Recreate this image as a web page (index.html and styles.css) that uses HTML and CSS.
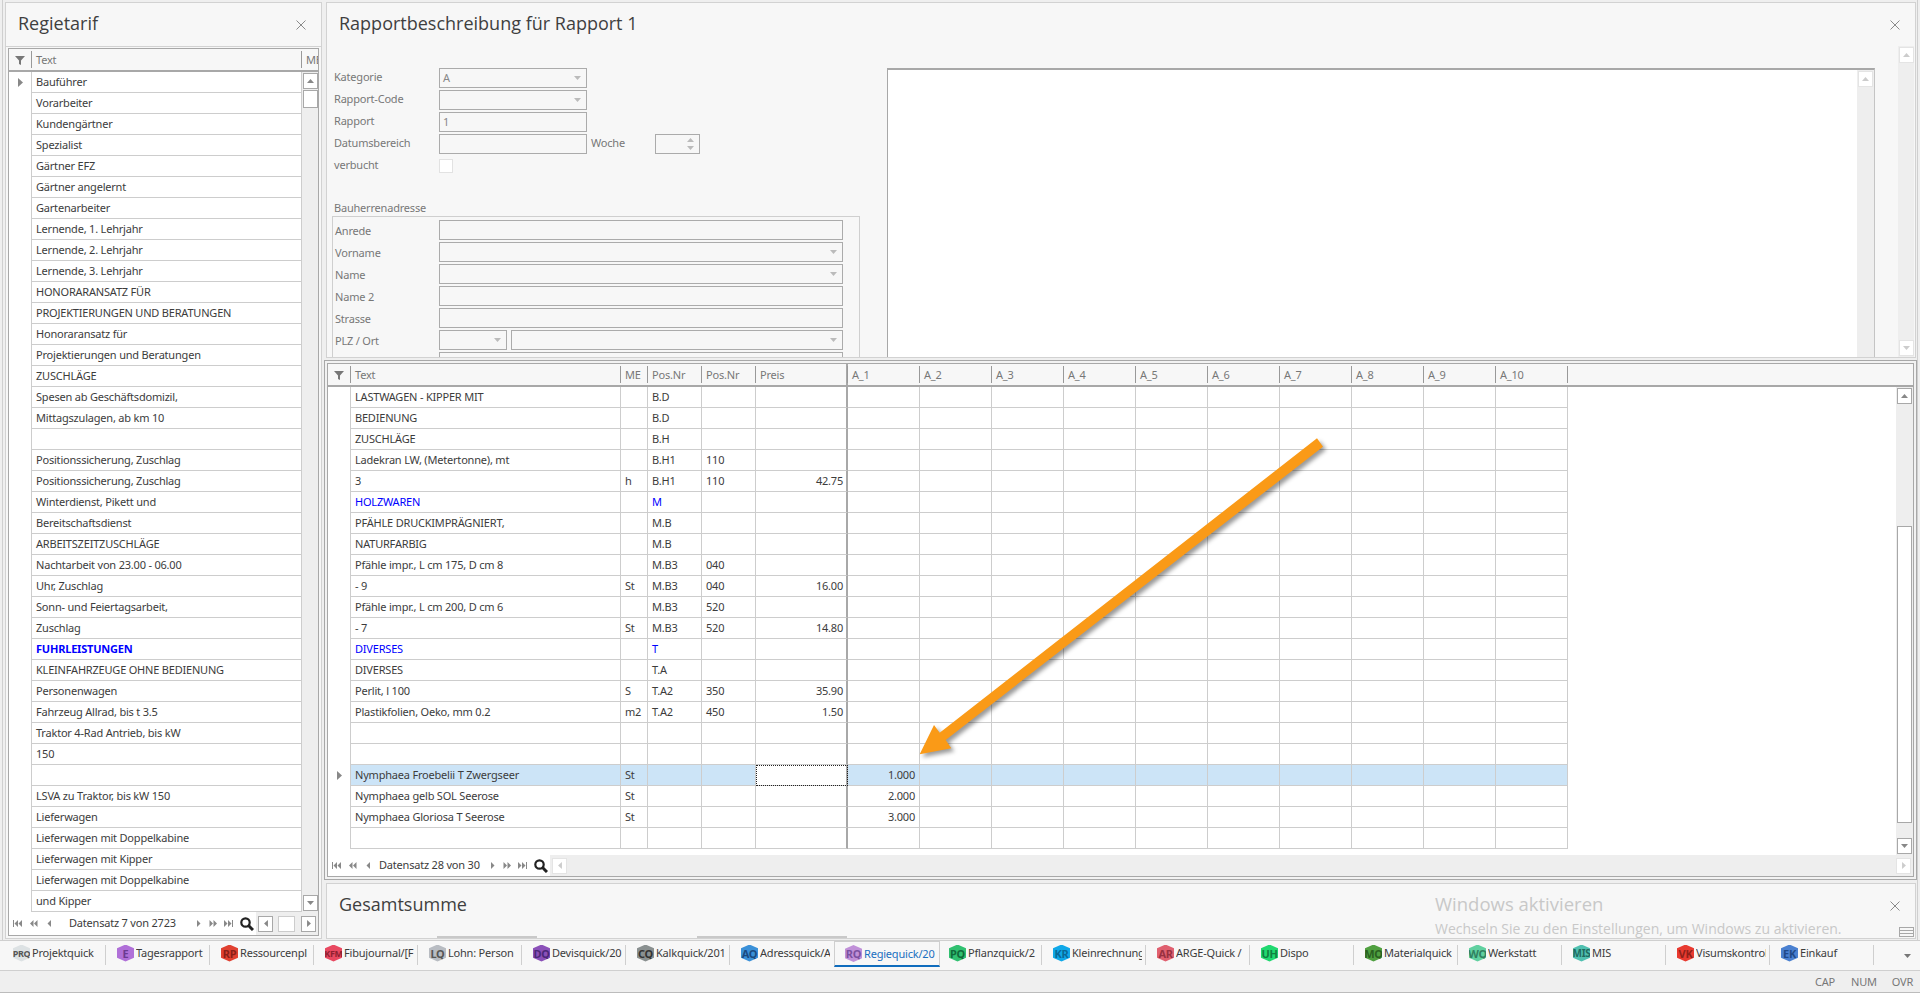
FILE: index.html
```html
<!DOCTYPE html>
<html>
<head>
	<meta charset="utf-8">
	<title>Regiequick</title>
	<link rel="stylesheet" href="styles.css">
</head>
<body>

<svg class="defs" width="0" height="0">
	<symbol id="i-filter" viewBox="0 0 10 10"><path d="M0 1h10L6 5.5V10L4 9V5.5z"/></symbol>
	<symbol id="i-row" viewBox="0 0 5 9"><path d="M0 0l5 4.5L0 9z"/></symbol>
	<symbol id="i-up" viewBox="0 0 9 5"><path d="M4.5 0L9 5H0z"/></symbol>
	<symbol id="i-down" viewBox="0 0 9 5"><path d="M0 0h9L4.500 5z"/></symbol>
	<symbol id="i-left" viewBox="0 0 5 9"><path d="M5 0v9L0 4.500z"/></symbol>
	<symbol id="i-right" viewBox="0 0 5 9"><path d="M0 0l5 4.500L0 9z"/></symbol>
	<symbol id="i-first" viewBox="0 0 9 7"><path d="M0 0h1v7H0zM5 0v7L1.500 3.500zM9 0v7L5.500 3.500z"/></symbol>
	<symbol id="i-pp" viewBox="0 0 9 7"><path d="M4.500 0v7L1 3.500zM8.500 0v7L5 3.500z"/></symbol>
	<symbol id="i-prev" viewBox="0 0 9 7"><path d="M6 0v7L2.500 3.500z"/></symbol>
	<symbol id="i-next" viewBox="0 0 9 7"><path d="M3 0v7l3.500-3.500z"/></symbol>
	<symbol id="i-nn" viewBox="0 0 9 7"><path d="M.5 0v7L4 3.500zM4.500 0v7L8 3.500z"/></symbol>
	<symbol id="i-last" viewBox="0 0 9 7"><path d="M0 0v7l3.500-3.500zM4 0v7l3.500-3.500zM8 0h1v7H8z"/></symbol>
	<symbol id="i-find" viewBox="0 0 14 14"><circle cx="5.500" cy="5.500" r="4.200" fill="none" stroke="currentColor" stroke-width="2.200"/><path d="M8.500 8.500l4.500 4.500" stroke="currentColor" stroke-width="3"/></symbol>
	<symbol id="i-close" viewBox="0 0 10 10"><path d="M.5.5l9 9M9.500.5l-9 9" fill="none" stroke="currentColor"/></symbol>
</svg>

<div class="main">

	<!-- Regietarif list -->
	<div class="panel left-panel">
		<div class="panel-head">
			<span class="panel-title">Regietarif</span>
			<svg class="close"><use href="#i-close"/></svg>
		</div>
		<div class="panel-body">
			<div class="grid">
				<table class="grid-head">
					<colgroup><col class="c-ind"><col class="c-text"><col></colgroup>
					<tr><th><svg class="filter"><use href="#i-filter"/></svg></th><th>Text</th><th class="clip">ME</th></tr>
				</table>
				<div class="grid-body">
					<table class="rows rows-left">
						<colgroup><col class="c-ind"><col class="c-text"></colgroup>
						<tr><td class="ind"><svg class="row-mark"><use href="#i-row"/></svg></td><td>Bauführer</td></tr>
						<tr><td class="ind"></td><td>Vorarbeiter</td></tr>
						<tr><td class="ind"></td><td>Kundengärtner</td></tr>
						<tr><td class="ind"></td><td>Spezialist</td></tr>
						<tr><td class="ind"></td><td>Gärtner EFZ</td></tr>
						<tr><td class="ind"></td><td>Gärtner angelernt</td></tr>
						<tr><td class="ind"></td><td>Gartenarbeiter</td></tr>
						<tr><td class="ind"></td><td>Lernende, 1. Lehrjahr</td></tr>
						<tr><td class="ind"></td><td>Lernende, 2. Lehrjahr</td></tr>
						<tr><td class="ind"></td><td>Lernende, 3. Lehrjahr</td></tr>
						<tr><td class="ind"></td><td>HONORARANSATZ FÜR</td></tr>
						<tr><td class="ind"></td><td>PROJEKTIERUNGEN UND BERATUNGEN</td></tr>
						<tr><td class="ind"></td><td>Honoraransatz für</td></tr>
						<tr><td class="ind"></td><td>Projektierungen und Beratungen</td></tr>
						<tr><td class="ind"></td><td>ZUSCHLÄGE</td></tr>
						<tr><td class="ind"></td><td>Spesen ab Geschäftsdomizil,</td></tr>
						<tr><td class="ind"></td><td>Mittagszulagen, ab km 10</td></tr>
						<tr><td class="ind"></td><td></td></tr>
						<tr><td class="ind"></td><td>Positionssicherung, Zuschlag</td></tr>
						<tr><td class="ind"></td><td>Positionssicherung, Zuschlag</td></tr>
						<tr><td class="ind"></td><td>Winterdienst, Pikett und</td></tr>
						<tr><td class="ind"></td><td>Bereitschaftsdienst</td></tr>
						<tr><td class="ind"></td><td>ARBEITSZEITZUSCHLÄGE</td></tr>
						<tr><td class="ind"></td><td>Nachtarbeit von 23.00 - 06.00</td></tr>
						<tr><td class="ind"></td><td>Uhr, Zuschlag</td></tr>
						<tr><td class="ind"></td><td>Sonn- und Feiertagsarbeit,</td></tr>
						<tr><td class="ind"></td><td>Zuschlag</td></tr>
						<tr><td class="ind"></td><td class="blue bold">FUHRLEISTUNGEN</td></tr>
						<tr><td class="ind"></td><td>KLEINFAHRZEUGE OHNE BEDIENUNG</td></tr>
						<tr><td class="ind"></td><td>Personenwagen</td></tr>
						<tr><td class="ind"></td><td>Fahrzeug Allrad, bis t 3.5</td></tr>
						<tr><td class="ind"></td><td>Traktor 4-Rad Antrieb, bis kW</td></tr>
						<tr><td class="ind"></td><td>150</td></tr>
						<tr><td class="ind"></td><td></td></tr>
						<tr><td class="ind"></td><td>LSVA zu Traktor, bis kW 150</td></tr>
						<tr><td class="ind"></td><td>Lieferwagen</td></tr>
						<tr><td class="ind"></td><td>Lieferwagen mit Doppelkabine</td></tr>
						<tr><td class="ind"></td><td>Lieferwagen mit Kipper</td></tr>
						<tr><td class="ind"></td><td>Lieferwagen mit Doppelkabine</td></tr>
						<tr><td class="ind"></td><td>und Kipper</td></tr>
					</table>
					<div class="vscroll">
						<div class="sb-btn"><svg class="tri-v"><use href="#i-up"/></svg></div>
						<div class="thumb thumb-small"></div>
						<div class="sb-btn sb-end"><svg class="tri-v"><use href="#i-down"/></svg></div>
					</div>
				</div>
				<div class="nav nav-left">
					<span class="nav-btn"><svg><use href="#i-first"/></svg></span>
					<span class="nav-btn"><svg><use href="#i-pp"/></svg></span>
					<span class="nav-btn"><svg><use href="#i-prev"/></svg></span>
					<span class="nav-text">Datensatz 7 von 2723</span>
					<span class="nav-btn narrow"><svg><use href="#i-next"/></svg></span>
					<span class="nav-btn narrow"><svg><use href="#i-nn"/></svg></span>
					<span class="nav-btn narrow"><svg><use href="#i-last"/></svg></span>
					<svg class="find"><use href="#i-find"/></svg>
					<div class="hscroll">
						<div class="sb-btn"><svg class="tri-h"><use href="#i-left"/></svg></div>
						<div class="hthumb"></div>
						<div class="sb-btn sb-right"><svg class="tri-h"><use href="#i-right"/></svg></div>
					</div>
				</div>
			</div>
		</div>
	</div>

	<div class="right-col">

		<!-- Rapport form -->
		<div class="panel top-panel">
			<div class="panel-head no-line">
				<span class="panel-title">Rapportbeschreibung für Rapport 1</span>
				<svg class="close"><use href="#i-close"/></svg>
			</div>
			<div class="top-body">
				<div class="form">
					<div class="form-row"><label>Kategorie</label><div class="field w-148 combo"><span>A</span><svg class="tri-v"><use href="#i-down"/></svg></div></div>
					<div class="form-row"><label>Rapport-Code</label><div class="field w-148 combo"><svg class="tri-v"><use href="#i-down"/></svg></div></div>
					<div class="form-row"><label>Rapport</label><div class="field w-148"><span>1</span></div></div>
					<div class="form-row">
						<label>Datumsbereich</label><div class="field w-148"></div>
						<label class="week-label">Woche</label>
						<div class="field spin"><svg class="tri-s"><use href="#i-up"/></svg><svg class="tri-s"><use href="#i-down"/></svg></div>
					</div>
					<div class="form-row"><label>verbucht</label><div class="check"></div></div>
					<div class="group-title">Bauherrenadresse</div>
					<div class="group">
						<div class="form-row"><label>Anrede</label><div class="field w-404"></div></div>
						<div class="form-row"><label>Vorname</label><div class="field w-404 combo"><svg class="tri-v"><use href="#i-down"/></svg></div></div>
						<div class="form-row"><label>Name</label><div class="field w-404 combo"><svg class="tri-v"><use href="#i-down"/></svg></div></div>
						<div class="form-row"><label>Name 2</label><div class="field w-404"></div></div>
						<div class="form-row"><label>Strasse</label><div class="field w-404"></div></div>
						<div class="form-row">
							<label>PLZ / Ort</label>
							<div class="field w-68 combo"><svg class="tri-v"><use href="#i-down"/></svg></div>
							<div class="field w-332 combo"><svg class="tri-v"><use href="#i-down"/></svg></div>
						</div>
						<div class="form-row"><label></label><div class="field w-404"></div></div>
					</div>
				</div>
				<div class="memo">
					<div class="memo-scroll"><div class="sb-btn off"><svg class="tri-v"><use href="#i-up"/></svg></div></div>
				</div>
				<div class="vscroll outer-scroll">
					<div class="sb-btn off"><svg class="tri-v"><use href="#i-up"/></svg></div>
					<div class="sb-btn off sb-end"><svg class="tri-v"><use href="#i-down"/></svg></div>
				</div>
			</div>
		</div>

		<!-- Rapport positions -->
		<div class="grid-wrap">
			<div class="grid">
				<table class="grid-head head-wide">
					<colgroup><col class="c-ind"><col class="c-text"><col class="c-unit"><col class="c-pos"><col class="c-pos"><col class="c-price"><col class="c-a" span="10"><col></colgroup>
					<tr><th><svg class="filter"><use href="#i-filter"/></svg></th><th>Text</th><th>ME</th><th>Pos.Nr</th><th>Pos.Nr</th><th class="freeze">Preis</th><th>A_1</th><th>A_2</th><th>A_3</th><th>A_4</th><th>A_5</th><th>A_6</th><th>A_7</th><th>A_8</th><th>A_9</th><th>A_10</th><th class="clip"></th></tr>
				</table>
				<div class="grid-body">
					<div class="rows-area">
						<table class="rows rows-wide">
							<colgroup><col class="c-ind"><col class="c-text"><col class="c-unit"><col class="c-pos"><col class="c-pos"><col class="c-price"><col class="c-a" span="10"></colgroup>
							<tr><td class="ind"></td><td>LASTWAGEN - KIPPER MIT</td><td></td><td>B.D</td><td></td><td class="freeze"></td><td></td><td></td><td></td><td></td><td></td><td></td><td></td><td></td><td></td><td></td></tr>
							<tr><td class="ind"></td><td>BEDIENUNG</td><td></td><td>B.D</td><td></td><td class="freeze"></td><td></td><td></td><td></td><td></td><td></td><td></td><td></td><td></td><td></td><td></td></tr>
							<tr><td class="ind"></td><td>ZUSCHLÄGE</td><td></td><td>B.H</td><td></td><td class="freeze"></td><td></td><td></td><td></td><td></td><td></td><td></td><td></td><td></td><td></td><td></td></tr>
							<tr><td class="ind"></td><td>Ladekran LW, (Metertonne), mt</td><td></td><td>B.H1</td><td>110</td><td class="freeze"></td><td></td><td></td><td></td><td></td><td></td><td></td><td></td><td></td><td></td><td></td></tr>
							<tr><td class="ind"></td><td>3</td><td>h</td><td>B.H1</td><td>110</td><td class="freeze num">42.75</td><td></td><td></td><td></td><td></td><td></td><td></td><td></td><td></td><td></td><td></td></tr>
							<tr><td class="ind"></td><td class="blue">HOLZWAREN</td><td></td><td class="blue">M</td><td></td><td class="freeze"></td><td></td><td></td><td></td><td></td><td></td><td></td><td></td><td></td><td></td><td></td></tr>
							<tr><td class="ind"></td><td>PFÄHLE DRUCKIMPRÄGNIERT,</td><td></td><td>M.B</td><td></td><td class="freeze"></td><td></td><td></td><td></td><td></td><td></td><td></td><td></td><td></td><td></td><td></td></tr>
							<tr><td class="ind"></td><td>NATURFARBIG</td><td></td><td>M.B</td><td></td><td class="freeze"></td><td></td><td></td><td></td><td></td><td></td><td></td><td></td><td></td><td></td><td></td></tr>
							<tr><td class="ind"></td><td>Pfähle impr., L cm 175, D cm 8</td><td></td><td>M.B3</td><td>040</td><td class="freeze"></td><td></td><td></td><td></td><td></td><td></td><td></td><td></td><td></td><td></td><td></td></tr>
							<tr><td class="ind"></td><td>- 9</td><td>St</td><td>M.B3</td><td>040</td><td class="freeze num">16.00</td><td></td><td></td><td></td><td></td><td></td><td></td><td></td><td></td><td></td><td></td></tr>
							<tr><td class="ind"></td><td>Pfähle impr., L cm 200, D cm 6</td><td></td><td>M.B3</td><td>520</td><td class="freeze"></td><td></td><td></td><td></td><td></td><td></td><td></td><td></td><td></td><td></td><td></td></tr>
							<tr><td class="ind"></td><td>- 7</td><td>St</td><td>M.B3</td><td>520</td><td class="freeze num">14.80</td><td></td><td></td><td></td><td></td><td></td><td></td><td></td><td></td><td></td><td></td></tr>
							<tr><td class="ind"></td><td class="blue">DIVERSES</td><td></td><td class="blue">T</td><td></td><td class="freeze"></td><td></td><td></td><td></td><td></td><td></td><td></td><td></td><td></td><td></td><td></td></tr>
							<tr><td class="ind"></td><td>DIVERSES</td><td></td><td>T.A</td><td></td><td class="freeze"></td><td></td><td></td><td></td><td></td><td></td><td></td><td></td><td></td><td></td><td></td></tr>
							<tr><td class="ind"></td><td>Perlit, l 100</td><td>S</td><td>T.A2</td><td>350</td><td class="freeze num">35.90</td><td></td><td></td><td></td><td></td><td></td><td></td><td></td><td></td><td></td><td></td></tr>
							<tr><td class="ind"></td><td>Plastikfolien, Oeko, mm 0.2</td><td>m2</td><td>T.A2</td><td>450</td><td class="freeze num">1.50</td><td></td><td></td><td></td><td></td><td></td><td></td><td></td><td></td><td></td><td></td></tr>
							<tr><td class="ind"></td><td></td><td></td><td></td><td></td><td class="freeze"></td><td></td><td></td><td></td><td></td><td></td><td></td><td></td><td></td><td></td><td></td></tr>
							<tr><td class="ind"></td><td></td><td></td><td></td><td></td><td class="freeze"></td><td></td><td></td><td></td><td></td><td></td><td></td><td></td><td></td><td></td><td></td></tr>
							<tr class="selected"><td class="ind"><svg class="row-mark"><use href="#i-row"/></svg></td><td>Nymphaea Froebelii T Zwergseer</td><td>St</td><td></td><td></td><td class="freeze focus"></td><td class="num">1.000</td><td></td><td></td><td></td><td></td><td></td><td></td><td></td><td></td><td></td></tr>
							<tr><td class="ind"></td><td>Nymphaea gelb SOL Seerose</td><td>St</td><td></td><td></td><td class="freeze"></td><td class="num">2.000</td><td></td><td></td><td></td><td></td><td></td><td></td><td></td><td></td><td></td></tr>
							<tr><td class="ind"></td><td>Nymphaea Gloriosa T Seerose</td><td>St</td><td></td><td></td><td class="freeze"></td><td class="num">3.000</td><td></td><td></td><td></td><td></td><td></td><td></td><td></td><td></td><td></td></tr>
							<tr><td class="ind"></td><td></td><td></td><td></td><td></td><td class="freeze"></td><td></td><td></td><td></td><td></td><td></td><td></td><td></td><td></td><td></td><td></td></tr>
						</table>
					</div>
					<div class="vscroll wide-scroll">
						<div class="sb-btn"><svg class="tri-v"><use href="#i-up"/></svg></div>
						<div class="thumb thumb-big"></div>
						<div class="sb-btn sb-end"><svg class="tri-v"><use href="#i-down"/></svg></div>
					</div>
				</div>
				<div class="nav nav-wide">
					<span class="nav-btn"><svg><use href="#i-first"/></svg></span>
					<span class="nav-btn"><svg><use href="#i-pp"/></svg></span>
					<span class="nav-btn"><svg><use href="#i-prev"/></svg></span>
					<span class="nav-text">Datensatz 28 von 30</span>
					<span class="nav-btn narrow"><svg><use href="#i-next"/></svg></span>
					<span class="nav-btn narrow"><svg><use href="#i-nn"/></svg></span>
					<span class="nav-btn narrow"><svg><use href="#i-last"/></svg></span>
					<svg class="find"><use href="#i-find"/></svg>
					<div class="hscroll">
						<div class="sb-btn off"><svg class="tri-h"><use href="#i-left"/></svg></div>
						<div class="sb-btn off sb-right"><svg class="tri-h"><use href="#i-right"/></svg></div>
					</div>
				</div>
			</div>
		</div>

		<!-- Gesamtsumme -->
		<div class="panel summary">
			<div class="panel-head no-line">
				<span class="panel-title">Gesamtsumme</span>
				<svg class="close"><use href="#i-close"/></svg>
			</div>
			<div class="sum-mark sum-mark-a"></div>
			<div class="sum-mark sum-mark-b"></div>
			<div class="split-icon"></div>
			<div class="watermark">
				<div class="wm-title">Windows aktivieren</div>
				<div class="wm-text">Wechseln Sie zu den Einstellungen, um Windows zu aktivieren.</div>
			</div>
		</div>
	</div>

	<!-- arrow drawn on top of the grid -->
	<svg class="arrow" viewBox="0 0 415 330"><path d="M6.700 324.300L21 295l5.700 7.700L404 8.300l6 8.400L32.700 310l5.600 8.300z"/></svg>
</div>

<div class="tabbar">
	<div class="tab"><span class="hex h-prq">PRQ</span><span class="tab-label">Projektquick</span></div>
	<div class="tab"><span class="hex h-e">E</span><span class="tab-label">Tagesrapport</span></div>
	<div class="tab"><span class="hex h-rp">RP</span><span class="tab-label">Ressourcenpl</span></div>
	<div class="tab"><span class="hex h-kfm">KFM</span><span class="tab-label">Fibujournal/[F</span></div>
	<div class="tab"><span class="hex h-lq">LQ</span><span class="tab-label">Lohn: Person</span></div>
	<div class="tab"><span class="hex h-dq">DQ</span><span class="tab-label">Devisquick/20</span></div>
	<div class="tab"><span class="hex h-cq">CQ</span><span class="tab-label">Kalkquick/201</span></div>
	<div class="tab before-active"><span class="hex h-aq">AQ</span><span class="tab-label">Adressquick/A</span></div>
	<div class="tab active"><span class="hex h-rq">RQ</span><span class="tab-label">Regiequick/20</span></div>
	<div class="tab"><span class="hex h-pq">PQ</span><span class="tab-label">Pflanzquick/2</span></div>
	<div class="tab"><span class="hex h-kr">KR</span><span class="tab-label">Kleinrechnung</span></div>
	<div class="tab"><span class="hex h-ar">AR</span><span class="tab-label">ARGE-Quick /</span></div>
	<div class="tab"><span class="hex h-uh">UH</span><span class="tab-label">Dispo</span></div>
	<div class="tab"><span class="hex h-mq">MQ</span><span class="tab-label">Materialquick</span></div>
	<div class="tab"><span class="hex h-wq">WQ</span><span class="tab-label">Werkstatt</span></div>
	<div class="tab"><span class="hex h-mis">MIS</span><span class="tab-label">MIS</span></div>
	<div class="tab"><span class="hex h-vk">VK</span><span class="tab-label">Visumskontrol</span></div>
	<div class="tab"><span class="hex h-ek">EK</span><span class="tab-label">Einkauf</span></div>
	<svg class="tab-more"><use href="#i-down"/></svg>
</div>

<div class="statusbar">
	<span class="st-cap">CAP</span>
	<span class="st-num">NUM</span>
	<span class="st-ovr">OVR</span>
</div>

</body>
</html>
```

FILE: styles.css
```css
html, body {
	margin: 0;
	height: 100%;
}

body {
	display: flex;
	flex-direction: column;
	height: 993px;
	overflow: hidden;
	background-color: #efefef;
	font-family: "Noto Sans", sans-serif;
	font-size: 11px;
	letter-spacing: -0.2px;
	color: #3c3c3c;
}

.defs {
	position: absolute;
}

svg {
	display: block;
	fill: currentColor;
}

.main {
	position: relative;
	display: flex;
	height: 938px;
	margin: 0 2px;
	padding: 2px 0 0 2px;
	border-left: 1px solid #cfcfcf;
	border-right: 1px solid #cfcfcf;
}

/* Panels */
.panel {
	box-sizing: border-box;
	border: 1px solid #d2d2d2;
	background-color: #f7f7f7;
}

.panel-head {
	box-sizing: border-box;
	display: flex;
	align-items: center;
	justify-content: space-between;
	height: 44px;
	padding: 0 15px 0 12px;
	border-bottom: 1px solid #d2d2d2;
}

.panel-head.no-line {
	height: 43px;
	border-bottom: none;
}

.panel-title {
	padding-bottom: 3px;
	font-family: "Open Sans", sans-serif;
	font-size: 18px;
	letter-spacing: 0;
	color: #3f3f3f;
	white-space: nowrap;
}

.close {
	width: 10px;
	height: 10px;
	color: #8a8a8a;
}

.left-panel {
	display: flex;
	flex-direction: column;
	width: 317px;
	height: 937px;
	margin-right: 2px;
}

.left-panel .panel-body {
	flex: 1;
	display: flex;
	min-height: 0;
	padding: 1px 2px 2px;
}

.right-col {
	display: flex;
	flex-direction: column;
	width: 1593px;
}

/* Grids */
.grid {
	box-sizing: border-box;
	flex: 1;
	display: flex;
	flex-direction: column;
	min-width: 0;
	border: 1px solid #a8a8a8;
	background-color: #fff;
}

.grid-head,
.rows {
	table-layout: fixed;
	border-collapse: separate;
	border-spacing: 0;
}

.grid-head {
	height: 23px;
	flex: none;
	width: 100%;
	background-color: #f7f7f7;
	border-bottom: 2px solid #a8a8a8;
}

.grid-head th {
	height: 21px;
	padding: 0 0 0 4px;
	font-weight: normal;
	text-align: left;
	color: #777;
	white-space: nowrap;
	overflow: hidden;
	position: relative;
}

.grid-head th::after {
	content: "";
	position: absolute;
	right: 0;
	top: 2px;
	bottom: 2px;
	width: 1px;
	background-color: #999;
}

.grid-head th.clip::after {
	display: none;
}

.c-ind { width: 23px; }
.c-text { width: 270px; }
.c-unit { width: 27px; }
.c-pos { width: 54px; }
.c-price { width: 92px; }
.c-a { width: 72px; }

.filter {
	width: 10px;
	height: 10px;
	margin-left: 2px;
	color: #777;
}

.grid-body {
	flex: 1;
	display: flex;
	min-height: 0;
	background-color: #fff;
}

.rows-area {
	flex: 1;
	min-width: 0;
}

.rows {
	flex: none;
	align-self: flex-start;
}

.rows-left { width: 293px; }
.rows-wide { width: 1240px; }

.rows td {
	box-sizing: border-box;
	height: 21px;
	padding: 0 4px 2px;
	border-right: 1px solid #cdcdcd;
	border-bottom: 1px solid #cdcdcd;
	white-space: nowrap;
	overflow: hidden;
}

.rows td.ind {
	padding: 0 0 0 8px;
	border-bottom: none;
}

.row-mark {
	width: 5px;
	height: 9px;
	margin-left: 1px;
	color: #888;
}

.rows .num {
	text-align: right;
}

.blue {
	color: #0000ff;
}

.bold {
	font-weight: bold;
}

.selected td {
	background-color: #cce4f7;
}

.selected td.ind {
	background-color: #fff;
}

.selected td.focus {
	background-color: #fff;
	outline: 1px dotted #222;
	outline-offset: -1px;
}

.freeze {
	box-shadow: inset -2px 0 0 #a8a8a8;
}

.rows td.freeze {
	border-right: 2px solid #a8a8a8;
	box-shadow: none;
}

.rows td.num.freeze {
	padding-right: 3px;
}

/* Scrollbars */
.vscroll {
	flex: 1;
	display: flex;
	flex-direction: column;
	align-items: center;
	padding: 1px 0;
	background-color: #eee;
}

.sb-btn {
	box-sizing: border-box;
	display: flex;
	flex: none;
	align-items: center;
	justify-content: center;
	width: 15px;
	height: 16px;
	border: 1px solid #a8a8a8;
	background-color: #fff;
	color: #888;
}

.sb-btn.off {
	border-color: #e4e4e4;
	color: #ccc;
}

.sb-end {
	margin-top: auto;
}

.tri-v {
	width: 7px;
	height: 4px;
}

.tri-h {
	width: 4px;
	height: 7px;
}

.thumb {
	box-sizing: border-box;
	width: 15px;
	border: 1px solid #a8a8a8;
	background-color: #fff;
}

.thumb-small {
	height: 18px;
	margin-top: 1px;
}

.thumb-big {
	height: 297px;
	margin-top: 122px;
}

.wide-scroll {
	flex: none;
	width: 17px;
}

/* Record navigator */
.nav {
	flex: none;
	display: flex;
	align-items: center;
	height: 23px;
	background-color: #fff;
}

.nav-wide {
	height: 21px;
}

.nav-btn {
	display: flex;
	align-items: center;
	justify-content: center;
	width: 16px;
	color: #888;
}

.nav-btn svg {
	width: 9px;
	height: 7px;
}

.nav-btn.narrow {
	width: 15px;
}

.nav-text {
	padding-bottom: 2px;
	color: #3c3c3c;
	white-space: nowrap;
}

.nav-left .nav-text {
	width: 122px;
	margin-left: 12px;
}

.nav-wide .nav-text {
	width: 106px;
	margin-left: 3px;
}

.find {
	flex: none;
	width: 14px;
	height: 14px;
	margin: 0 2px 0 4px;
	color: #222;
}

.hscroll {
	flex: 1;
	display: flex;
	align-items: center;
	align-self: stretch;
	padding: 1px 2px;
	background-color: #eee;
}

.hthumb {
	box-sizing: border-box;
	width: 17px;
	height: 16px;
	margin-left: 5px;
	border: 1px solid #ccc;
	background-color: #fff;
}

.sb-right {
	margin-left: auto;
}

/* Top form */
.top-panel {
	flex: none;
	height: 356px;
	margin: 0 1px 0 2px;
	overflow: hidden;
}

.top-body {
	display: flex;
	height: 311px;
	overflow: hidden;
}

.form {
	flex: none;
	box-sizing: border-box;
	width: 560px;
	padding: 22px 0 0 7px;
}

.form-row {
	display: flex;
	align-items: center;
	height: 20px;
	margin-bottom: 2px;
}

.form-row label {
	flex: none;
	width: 105px;
	padding-bottom: 3px;
	color: #777;
}

.field {
	box-sizing: border-box;
	flex: none;
	display: flex;
	align-items: center;
	height: 20px;
	padding: 0 3px;
	border: 1px solid #ababab;
	color: #888;
}

.field span {
	padding-bottom: 2px;
}

.combo {
	justify-content: space-between;
}

.combo .tri-v {
	margin-left: auto;
	margin-right: 2px;
	color: #bbb;
}

.w-148 { width: 148px; }
.w-404 { width: 404px; }
.w-68 { width: 68px; margin-right: 4px; }
.w-332 { width: 332px; }

.form-row .week-label {
	width: 64px;
	margin-left: 4px;
}

.spin {
	width: 45px;
	flex-direction: column;
	align-items: flex-end;
	justify-content: center;
	gap: 4px;
	color: #bbb;
}

.tri-s {
	width: 7px;
	height: 4px;
	margin-right: 2px;
}

.check {
	box-sizing: border-box;
	width: 14px;
	height: 14px;
	border: 1px solid #e2e2e2;
	background-color: #fff;
}

.group-title {
	margin-top: 24px;
	height: 16px;
	color: #777;
}

.group {
	box-sizing: border-box;
	width: 528px;
	margin-left: -2px;
	padding: 3px 0 0 2px;
	border: 1px solid #cfcfcf;
}

.group .form-row label {
	width: 104px;
	padding-bottom: 0;
}

.memo {
	flex: none;
	display: flex;
	justify-content: flex-end;
	box-sizing: border-box;
	width: 988px;
	margin-top: 22px;
	border-top: 2px solid #a8a8a8;
	border-left: 1px solid #a8a8a8;
	border-right: 1px solid #c4c4c4;
	background-color: #fff;
}

.memo-scroll {
	width: 17px;
	padding-top: 1px;
	background-color: #eee;
}

.memo-scroll .sb-btn {
	margin: 0 auto;
}

.outer-scroll {
	flex: none;
	width: 16px;
	margin-left: 23px;
}

/* Positions grid */
.grid-wrap {
	box-sizing: border-box;
	flex: none;
	display: flex;
	height: 520px;
	margin-top: 2px;
	padding: 2px;
	border: 1px solid #a8a8a8;
	background-color: #f2f2f2;
}

/* Summary */
.summary {
	position: relative;
	flex: 1;
	margin: 3px 1px 1px 2px;
}

.sum-mark {
	position: absolute;
	bottom: 0;
	height: 2px;
	background-color: #c9c9c9;
}

.sum-mark-a { left: 110px; width: 100px; }
.sum-mark-b { left: 370px; width: 150px; }

.split-icon {
	position: absolute;
	right: 1px;
	bottom: 1px;
	box-sizing: border-box;
	width: 15px;
	height: 10px;
	border: 1px solid #a8a8a8;
}

.split-icon::after {
	content: "";
	display: block;
	height: 2px;
	margin-top: 2px;
	border-top: 1px solid #a8a8a8;
	border-bottom: 1px solid #a8a8a8;
}

.watermark {
	position: absolute;
	left: 1108px;
	top: 7px;
	color: #c8c8c8;
	letter-spacing: 0;
	white-space: nowrap;
}

.wm-title {
	font-family: "Open Sans", sans-serif;
	font-size: 18.5px;
	line-height: 26px;
}

.wm-text {
	font-family: "Open Sans", sans-serif;
	font-size: 14px;
	line-height: 20px;
	margin-top: 2px;
}

/* Arrow overlay */
.arrow {
	position: absolute;
	left: 910px;
	top: 430px;
	width: 415px;
	height: 330px;
	fill: #fa9a17;
	filter: drop-shadow(3px 3px 2px rgba(0, 0, 0, 0.4));
	overflow: visible;
}

/* Window tabs */
.tabbar {
	box-sizing: border-box;
	position: relative;
	flex: none;
	display: flex;
	height: 31px;
	padding: 2px 0 0 2px;
	border-top: 1px solid #cfcfcf;
	border-bottom: 1px solid #cfcfcf;
	background-color: #f7f7f7;
}

.tab {
	box-sizing: border-box;
	position: relative;
	flex: none;
	display: flex;
	align-items: center;
	width: 104px;
	height: 22px;
	padding: 0 4px 2px 11px;
	color: #3c3c3c;
}

.tab::after {
	content: "";
	position: absolute;
	right: 0;
	top: 2px;
	bottom: 0;
	width: 1px;
	background-color: #cfcfcf;
}

.tab.before-active::after,
.tab.active::after {
	display: none;
}

.tab.active {
	width: 106px;
	height: 26px;
	margin: -2px -2px 0 0;
	padding: 0 4px 0 10px;
	border: 1px solid #cfcfcf;
	border-bottom: 2px solid #0f6cbd;
	color: #1a6fc0;
}

.tab-label {
	flex: 1;
	min-width: 0;
	padding-bottom: 1px;
	overflow: hidden;
	white-space: nowrap;
}

.hex {
	flex: none;
	display: flex;
	align-items: center;
	justify-content: center;
	width: 17px;
	height: 17px;
	margin-right: 2px;
	overflow: hidden;
	font-size: 11px;
	font-weight: bold;
	letter-spacing: -0.3px;
	clip-path: polygon(50% 0, 100% 22%, 100% 78%, 50% 100%, 0 78%, 0 22%);
}

.h-prq { background-color: #dde2e4; color: #555; font-size: 9px; }
.h-e { background-color: #b070d8; color: #6a3a90; }
.h-rp { background-color: #e04030; color: #8a2018; }
.h-kfm { background-color: #e84860; color: #902030; font-size: 9px; }
.h-lq { background-color: #b8bcc2; color: #555; }
.h-dq { background-color: #8a50b8; color: #4a2878; }
.h-cq { background-color: #8a9090; color: #333; }
.h-aq { background-color: #3a90d8; color: #1a4a80; }
.h-rq { background-color: #c090d8; color: #7a50a0; }
.h-pq { background-color: #30c070; color: #0f6a3a; }
.h-kr { background-color: #10a8e8; color: #0a6a98; }
.h-ar { background-color: #e06070; color: #983040; }
.h-uh { background-color: #20d870; color: #108040; }
.h-mq { background-color: #50a040; color: #2a6020; }
.h-wq { background-color: #60d0a0; color: #308060; }
.h-mis { background-color: #50c0b0; color: #206a60; font-size: 10px; }
.h-vk { background-color: #e83a30; color: #902018; }
.h-ek { background-color: #4a80d0; color: #204a88; }

.tab-more {
	width: 7px;
	height: 4px;
	margin: 11px 0 0 30px;
	color: #777;
}

/* Status bar */
.statusbar {
	box-sizing: border-box;
	flex: none;
	display: flex;
	align-items: center;
	height: 22px;
	padding: 0 0 1px 1815px;
	border-bottom: 1px solid #bcbcbc;
	color: #777;
}

.st-num { margin-left: 16px; }
.st-ovr { margin-left: 15px; }
```
